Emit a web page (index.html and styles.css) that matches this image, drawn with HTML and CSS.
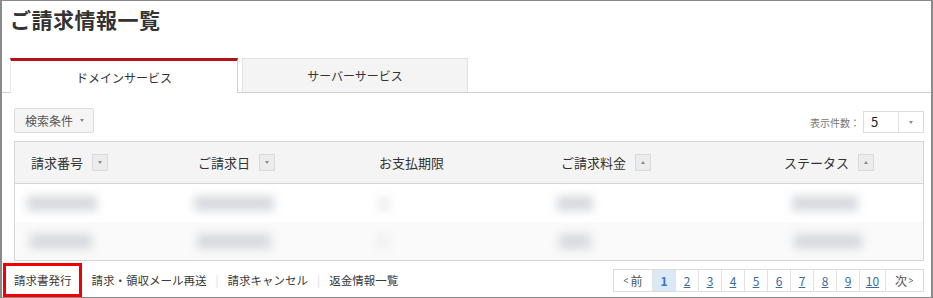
FILE: index.html
```html
<!DOCTYPE html>
<html lang="ja">
<head>
    <meta charset="UTF-8">
    <title>ご請求情報一覧</title>
    <link rel="stylesheet" href="styles.css">
</head>
<body>
    <div class="frame">
        <h1 class="title">ご請求情報一覧</h1>

        <div class="tabs">
            <div class="tab active">ドメインサービス</div>
            <div class="tab">サーバーサービス</div>
        </div>

        <div class="toolbar">
            <button class="search-btn">検索条件<span class="caret"></span></button>
            <div class="per-page">
                <span class="per-label">表示件数：</span>
                <div class="select">
                    <span class="select-value">5</span>
                    <span class="select-arrow"><span class="caret"></span></span>
                </div>
            </div>
        </div>

        <div class="table">
            <div class="row head">
                <div class="cell">請求番号<span class="sort"><span class="caret"></span></span></div>
                <div class="cell">ご請求日<span class="sort"><span class="caret"></span></span></div>
                <div class="cell">お支払期限</div>
                <div class="cell">ご請求料金<span class="sort"><span class="caret up"></span></span></div>
                <div class="cell">ステータス<span class="sort"><span class="caret up"></span></span></div>
            </div>
            <div class="row">
                <div class="cell"><span class="blur" style="width:70px;margin-left:-4px"></span></div>
                <div class="cell"><span class="blur" style="width:80px;margin-left:-4px"></span></div>
                <div class="cell"><span class="blur faint" style="width:14px;margin-left:-2px"></span></div>
                <div class="cell"><span class="blur" style="width:36px;margin-left:-4px"></span></div>
                <div class="cell"><span class="blur" style="width:66px;margin-left:8px"></span></div>
            </div>
            <div class="row alt">
                <div class="cell"><span class="blur" style="width:62px;margin-left:-1px"></span></div>
                <div class="cell"><span class="blur" style="width:74px;margin-left:-1px"></span></div>
                <div class="cell"><span class="blur faint" style="width:12px;margin-left:-2px"></span></div>
                <div class="cell"><span class="blur" style="width:32px;margin-left:-2px"></span></div>
                <div class="cell"><span class="blur" style="width:68px;margin-left:10px"></span></div>
            </div>
        </div>

        <div class="footer">
            <div class="links">
                <a class="link marked">請求書発行</a>
                <a class="link">請求・領収メール再送</a>
                <span class="sep">|</span>
                <a class="link">請求キャンセル</a>
                <span class="sep">|</span>
                <a class="link">返金情報一覧</a>
            </div>
            <div class="pager">
                <span class="page nav"><span class="chev">&lt;</span>前</span>
                <span class="page current">1</span>
                <a class="page">2</a>
                <a class="page">3</a>
                <a class="page">4</a>
                <a class="page">5</a>
                <a class="page">6</a>
                <a class="page">7</a>
                <a class="page">8</a>
                <a class="page">9</a>
                <a class="page wide">10</a>
                <span class="page nav">次<span class="chev">&gt;</span></span>
            </div>
        </div>
    </div>
</body>
</html>
```

FILE: styles.css
```css
body {
    margin: 0;
    font-family: "Noto Sans CJK JP", "Noto Sans", sans-serif;
    color: #333;
    background-color: white;
}

.frame {
    width: 933px;
    height: 298px;
    box-sizing: border-box;
    border: 1px solid #8a8a8a;
    border-left-width: 2px;
    border-right-width: 2px;
    overflow: hidden;
}

.title {
    margin: 0;
    padding: 4px 0 0 8px;
    height: 57px;
    box-sizing: border-box;
    font-size: 21px;
    line-height: 28px;
    font-weight: bold;
    color: #333;
    letter-spacing: 0.5px;
}

.tabs {
    display: flex;
    padding-left: 8px;
    gap: 4px;
    height: 34px;
    border-bottom: 1px solid #d0d0d0;
}

.tab {
    width: 226px;
    display: flex;
    align-items: center;
    justify-content: center;
    font-size: 12px;
    color: #333;
    background-color: #f4f4f4;
    border: 1px solid #e2e2e2;
    border-bottom: none;
    box-sizing: border-box;
}

    .tab.active {
        width: 228px;
        background-color: white;
        border: none;
        border-top: 3px solid #b3121a;
        border-right: 1px solid #d0d0d0;
        border-left: 1px solid #e6e6e6;
        margin-bottom: -1px;
    }

.toolbar {
    display: flex;
    justify-content: space-between;
    align-items: center;
    padding: 15px 7px 0 12px;
    height: 25px;
}

.search-btn {
    font-family: inherit;
    font-size: 12px;
    color: #555;
    background-color: #f5f5f5;
    border: 1px solid #dcdcdc;
    border-radius: 2px;
    height: 25px;
    padding: 0 9px 0 10px;
    display: flex;
    align-items: center;
    gap: 7px;
}

.caret {
    display: inline-block;
    width: 0;
    height: 0;
    border-left: 2.5px solid transparent;
    border-right: 2.5px solid transparent;
    border-top: 3px solid #888;
}

    .caret.up {
        border-top: none;
        border-bottom: 3px solid #888;
    }

.per-page {
    display: flex;
    align-items: center;
    gap: 3px;
    margin-top: 3px;
}

.per-label {
    font-size: 10px;
    color: #777;
}

.select {
    display: flex;
    width: 61px;
    height: 22px;
    border: 1px solid #dcdcdc;
    box-sizing: border-box;
    background-color: white;
}

.select-value {
    flex: 1;
    padding-left: 7px;
    font-size: 13px;
    line-height: 20px;
    color: #222;
}

.select-arrow {
    width: 24px;
    border-left: 1px solid #e2e2e2;
    display: flex;
    align-items: center;
    justify-content: center;
}

.table {
    margin: 8px 7px 0 12px;
    border: 1px solid #d6d6d6;
}

.row {
    display: grid;
    grid-template-columns: 167px 181px 182px 223px 1fr;
    height: 38px;
    align-items: center;
}

    .row.head {
        height: 41px;
        background-color: #f4f4f4;
        border-bottom: 1px solid #d6d6d6;
        font-size: 13px;
        color: #333;
    }

    .row.alt {
        background-color: #fafafa;
    }

.cell {
    padding-left: 16px;
    display: flex;
    align-items: center;
}

.sort {
    width: 16px;
    height: 17px;
    margin-left: 9px;
    background-color: #ececec;
    border: 1px solid #dadada;
    box-sizing: border-box;
    display: flex;
    align-items: center;
    justify-content: center;
}

.blur {
    display: inline-block;
    height: 15px;
    background-color: #d6d9de;
    filter: blur(5px);
}

    .blur.faint {
        background-color: #f0f0f0;
    }

.footer {
    display: flex;
    justify-content: space-between;
    align-items: center;
    height: 36px;
    padding: 0 7px 0 1px;
}

.links {
    display: flex;
    align-items: center;
    font-size: 11.5px;
    color: #3a3a3a;
    align-self: stretch;
    padding-top: 2px;
}

.link {
    cursor: pointer;
}

    .link.marked {
        align-self: stretch;
        display: flex;
        align-items: center;
        border: 3px solid #f00000;
        padding: 0 7px 0 8px;
        margin-right: 10px;
    }

.sep {
    color: #ddd;
    margin: 0 9px;
}

.pager {
    display: flex;
    border: 1px solid #dcdcdc;
    height: 23px;
    box-sizing: border-box;
    margin-top: 2px;
}

.page {
    width: 23px;
    box-sizing: border-box;
    display: flex;
    align-items: center;
    justify-content: center;
    font-size: 12px;
    color: #3b6aa0;
    text-decoration: underline;
    border-left: 1px solid #e2e2e2;
}

    .page:first-child {
        border-left: none;
    }

    .page.wide {
        width: 26px;
    }

    .page.nav {
        width: 38px;
        color: #555;
        text-decoration: none;
        gap: 1px;
    }

    .page.current {
        background-color: #dbe8f6;
        color: #3a78c0;
        font-weight: bold;
        text-decoration: none;
    }

.chev {
    font-size: 11px;
    color: #666;
    transform: scaleX(0.8);
}
```
